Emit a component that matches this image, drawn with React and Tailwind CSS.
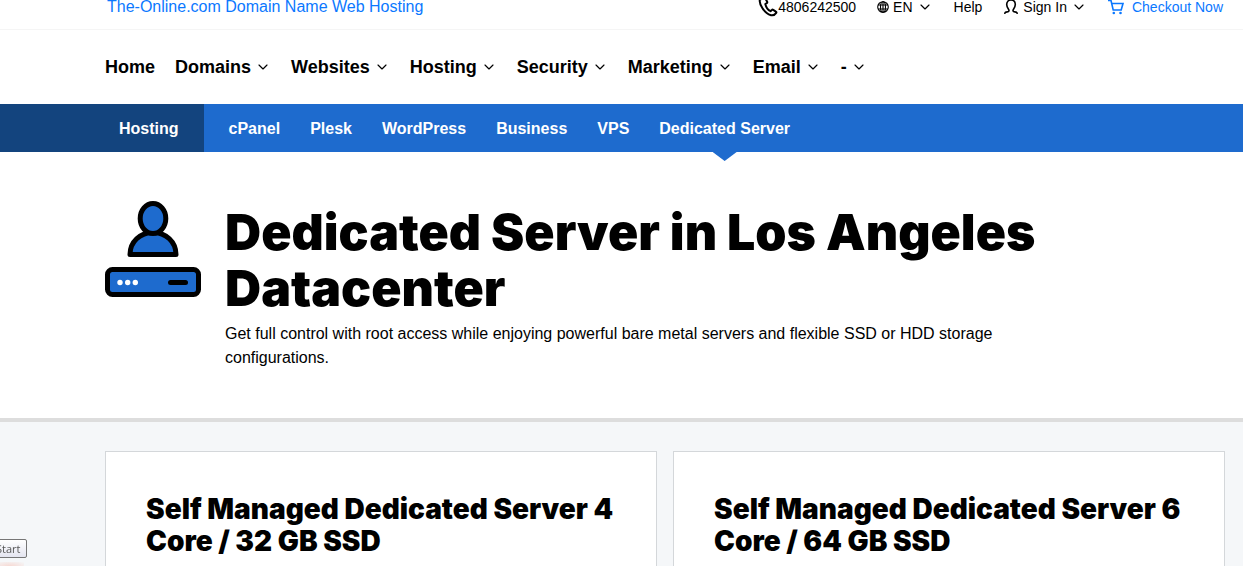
import React from 'react';
import { ChevronDown } from 'lucide-react';

const mainLinks = ['Domains', 'Websites', 'Hosting', 'Security', 'Marketing', 'Email', '-'];
const subLinks = ['cPanel', 'Plesk', 'WordPress', 'Business', 'VPS', 'Dedicated Server'];
const plans = [
  'Self Managed Dedicated Server 4 Core / 32 GB SSD',
  'Self Managed Dedicated Server 6 Core / 64 GB SSD',
];

const PhoneIcon = () => (
  <svg viewBox="0 0 20 20" className="w-5 h-5" fill="none" stroke="currentColor" strokeWidth="2" strokeLinejoin="round" aria-hidden="true">
    <path d="M4 1.500 1.800 3C1 6.500 6 16.500 13 18.200c2 .5 3.900-.4 5.200-2.300.3-.5.2-1-.3-1.300l-2.700-1.800c-.5-.3-1-.2-1.400.2l-1.300 1.200c-2.300-1-4.500-4.300-5.200-7.200l1.500-.9c.5-.3.6-.8.4-1.300L7.600 2c-.3-.5-.8-.7-1.300-.6z" />
  </svg>
);

const GlobeIcon = () => (
  <svg viewBox="0 0 12 12" className="w-3 h-3" fill="none" stroke="currentColor" strokeWidth="1.1" aria-hidden="true">
    <circle cx="6" cy="6" r="5.3" />
    <ellipse cx="6" cy="6" rx="2.5" ry="5.3" />
    <path d="M6 .5v11M1 4h10M1 8h10" />
  </svg>
);

const UserIcon = () => (
  <svg viewBox="0 0 16 16" className="w-4 h-4" fill="none" stroke="currentColor" strokeWidth="1.6" strokeLinecap="round" strokeLinejoin="round" aria-hidden="true">
    <path d="M1.800 14.200c.2-.8 1-1.200 2.400-1.300 2-.1 2.200-1.300 1.300-2.700C4.300 8.600 3.700 7.200 3.700 5.600 3.700 2.900 5.500 1 8 1s4.300 1.900 4.300 4.600c0 1.600-.6 3-1.800 4.600-.9 1.400-.7 2.600 1.300 2.700 1.400.1 2.200.5 2.400 1.300" />
  </svg>
);

const CartIcon = () => (
  <svg viewBox="0 0 16 16" className="w-4 h-4" fill="none" stroke="currentColor" strokeWidth="1.6" aria-hidden="true">
    <path d="M0 1.500h3L5.200 11h8L15 4.500H3.800" />
    <circle cx="5.800" cy="14" r="1.300" fill="currentColor" stroke="none" />
    <circle cx="12.500" cy="14" r="1.300" fill="currentColor" stroke="none" />
  </svg>
);

const ServerIcon = () => (
  <svg viewBox="0 0 96 96" className="w-24 h-24 shrink-0" fill="#1e6bce" stroke="#000" strokeWidth="5" strokeLinejoin="round" aria-hidden="true">
    <path d="M25 53.500h46C71 41 61 31.500 48 31.500S25 41 25 53.500z" />
    <ellipse cx="48" cy="17.500" rx="12.800" ry="15" />
    <rect x="2.500" y="68.500" width="91" height="25" rx="5" />
    <path d="M65.500 81.500h15" strokeLinecap="round" />
    <g fill="#fff" stroke="none">
      <circle cx="15" cy="81.500" r="2.700" />
      <circle cx="22.700" cy="81.500" r="2.700" />
      <circle cx="30.300" cy="81.500" r="2.700" />
    </g>
  </svg>
);

const TopBar = () => (
  <div className="pb-[15px] border-b border-[#f5f5f5]">
    <div className="flex items-center justify-between h-[14px] pl-[107px] pr-5 leading-[14px] whitespace-nowrap">
      <a href="#" className="text-base leading-[14px] text-[#0b78ff]">The-Online.com Domain Name Web Hosting</a>
      <div className="flex items-center gap-[21px] text-sm leading-[14px]">
        <a href="tel:4806242500" className="flex items-center"><PhoneIcon />4806242500</a>
        <button className="flex items-center gap-1">
          <GlobeIcon />EN<ChevronDown className="w-4 h-4" strokeWidth={1.75} />
        </button>
        <a href="#">Help</a>
        <button className="flex items-center gap-1">
          <UserIcon />Sign In<ChevronDown className="w-4 h-4" strokeWidth={1.75} />
        </button>
        <a href="#" className="flex items-center gap-2 text-[#0b78ff]"><CartIcon />Checkout Now</a>
      </div>
    </div>
  </div>
);

const MainNav = () => (
  <nav className="flex items-center gap-5 h-[74px] pl-[105px] text-lg font-bold whitespace-nowrap">
    <a href="#">Home</a>
    {mainLinks.map((label) => (
      <button key={label} className="flex items-center gap-1">
        {label}<ChevronDown className="w-4 h-4" strokeWidth={1.75} />
      </button>
    ))}
  </nav>
);

const SubNav = () => (
  <nav className="flex h-12 text-base font-bold text-white whitespace-nowrap bg-[#1e6bce]">
    <a href="#" className="flex items-center pt-px pl-[119px] pr-[25px] bg-[#13447e]">Hosting</a>
    <div className="flex gap-[30px] pl-[25px]">
      {subLinks.map((label) => (
        <a key={label} href="#" className="relative flex items-center pt-px">
          {label}
          {label === 'Dedicated Server' && (
            <span className="absolute top-full left-1/2 -translate-x-1/2 w-6 h-[9px] bg-[#1e6bce] [clip-path:polygon(0_0,100%_0,50%_100%)]" />
          )}
        </a>
      ))}
    </div>
  </nav>
);

const Hero = () => (
  <section className="flex gap-6 pt-[49px] pb-12 pl-[105px] pr-[18px] border-b-4 border-[#dddddd]">
    <ServerIcon />
    <div className="max-w-[840px] pt-[3px]">
      <h1 className="font-['Inter',sans-serif] text-[50px] leading-[56px] font-black">Dedicated Server in Los Angeles Datacenter</h1>
      <p className="mt-[6px] max-w-[800px] text-base leading-6">
        Get full control with root access while enjoying powerful bare metal servers and flexible SSD or HDD storage configurations.
      </p>
    </div>
  </section>
);

const App = () => (
  <div className="flex flex-col min-h-screen overflow-hidden bg-white text-black font-['Liberation_Sans',Arial,sans-serif]">
    <header>
      <TopBar />
      <MainNav />
      <SubNav />
    </header>
    <Hero />
    <main className="flex flex-1 gap-4 pt-[29px] pl-[105px] pr-[18px] bg-[#f5f7f9]">
      {plans.map((plan) => (
        <article key={plan} className="flex-1 px-10 pt-[41px] bg-white border border-b-0 border-[#d4d7da]">
          <h2 className="font-['Inter',sans-serif] text-[28px] leading-8 font-black">{plan}</h2>
        </article>
      ))}
    </main>
    <button className="fixed bottom-2 -left-[11px] h-[19px] px-1.5 text-[11px] leading-4 text-[#575757] bg-linear-to-b from-white to-[#e4e5f0] border border-[#767676] rounded-xs font-['Open_Sans',sans-serif]">
      Start
    </button>
    <div className="fixed bottom-0 left-0 w-6 h-1 bg-radial-[at_40%_100%] from-[#f6d9d3] to-transparent" />
  </div>
);

export default App;
